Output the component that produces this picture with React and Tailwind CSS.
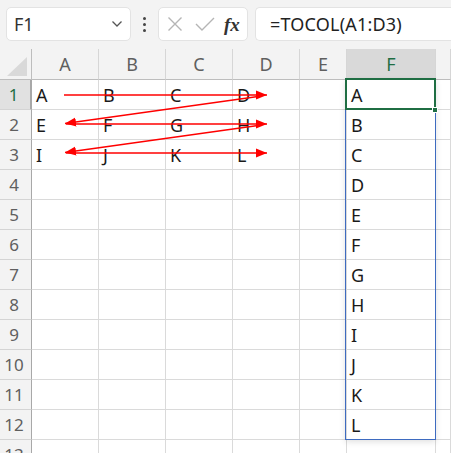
import React from "react";

const FONT = { fontFamily: '"Noto Sans", "Noto Sans CJK JP", sans-serif' };
const data = [
  ["A", "B", "C", "D"],
  ["E", "F", "G", "H"],
  ["I", "J", "K", "L"],
];
const fcol = "ABCDEFGHIJKL";
const headers = ["A", "B", "C", "D", "E", "F", ""];

function Toolbar() {
  return (
    <div className="h-[49px] flex items-start pt-[7px] pl-[6px] bg-[#f3f3f3]">
      <div className="w-[125px] h-[34px] bg-white rounded-[5px] border border-[#e3e3e3] flex items-center pl-[7px] pr-[7px] justify-between">
        <span className="text-[18px] text-[#333] leading-none">F1</span>
        <svg width="12" height="8" viewBox="0 0 12 8">
          <path d="M1.5 1.5 L6 6 L10.5 1.5" fill="none" stroke="#555" strokeWidth="1.3" />
        </svg>
      </div>
      <div className="w-[27px] h-[34px] flex flex-col items-center justify-center gap-[3px]">
        <div className="w-[3px] h-[3px] rounded-full bg-[#444]" />
        <div className="w-[3px] h-[3px] rounded-full bg-[#444]" />
        <div className="w-[3px] h-[3px] rounded-full bg-[#444]" />
      </div>
      <div className="w-[90px] h-[34px] bg-white rounded-[5px] border border-[#e3e3e3] flex items-center pl-[8px]">
        <svg width="16" height="16" viewBox="0 0 16 16" className="mr-[12px]">
          <path d="M1.5 1.5 L14.5 14.5 M14.5 1.5 L1.5 14.5" stroke="#b5b5b5" strokeWidth="1.4" fill="none" />
        </svg>
        <svg width="20" height="16" viewBox="0 0 20 16" className="mr-[9px]">
          <path d="M1 8 L7 14 L19 2" stroke="#b5b5b5" strokeWidth="1.4" fill="none" />
        </svg>
        <span
          className="text-[19px] italic font-bold text-[#333] leading-none"
          style={{ fontFamily: '"Liberation Serif", "DejaVu Serif", serif' }}
        >
          fx
        </span>
      </div>
      <div className="ml-[7px] flex-1 h-[34px] bg-white rounded-l-[5px] border border-r-0 border-[#e3e3e3] flex items-center pl-[14px]">
        <span className="text-[18px] text-[#222] leading-none tracking-[0.2px]">=TOCOL(A1:D3)</span>
      </div>
    </div>
  );
}

function Grid() {
  const rows = [];
  for (let r = 1; r <= 13; r++) {
    const vals = [
      r <= 3 ? data[r - 1][0] : "",
      r <= 3 ? data[r - 1][1] : "",
      r <= 3 ? data[r - 1][2] : "",
      r <= 3 ? data[r - 1][3] : "",
      "",
      r <= 12 ? fcol[r - 1] : "",
      "",
    ];
    rows.push(
      <div
        key={"rh" + r}
        className={
          "h-[30px] flex items-center justify-center pr-[3px] border-b border-b-[#d4d4d4] border-r border-r-[#a8a8a8] text-[17px] leading-none " +
          (r === 1 ? "bg-[#e1e1e1] text-[#1f6e43] border-r-2 border-r-[#1f6e43]" : "bg-[#f3f3f3] text-[#5f5f5f]")
        }
      >
        {r}
      </div>
    );
    vals.forEach((v, i) => {
      rows.push(
        <div
          key={r + "-" + i}
          className="h-[30px] flex items-center pl-[4px] border-b border-r border-[#dadada] bg-white text-[18px] text-[#1a1a1a] leading-none"
        >
          {v}
        </div>
      );
    });
  }
  return (
    <div className="grid grid-cols-[32px_67px_67px_67px_67px_47px_89px_1fr]">
      <div className="h-[31px] bg-[#f3f3f3] border-b border-r border-[#bdbdbd] flex items-end justify-end pr-[4px] pb-[3px]">
        <svg width="20" height="19" viewBox="0 0 20 19">
          <path d="M0 19 L20 0 L20 19 Z" fill="#d9d9d9" />
        </svg>
      </div>
      {headers.map((h, i) => (
        <div
          key={"h" + i}
          className={
            "h-[31px] flex items-center justify-center border-r border-r-[#d6d6d6] text-[18px] leading-none " +
            (h === "F"
              ? "bg-[#d9d9d9] text-[#1f6e43] border-b-2 border-b-[#1f6e43]"
              : "bg-[#f3f3f3] text-[#5f5f5f] border-b border-b-[#bdbdbd]")
          }
        >
          {h}
        </div>
      ))}
      {rows}
    </div>
  );
}

function Arrows() {
  return (
    <svg className="absolute left-0 top-0 pointer-events-none" width="451" height="453" viewBox="0 0 451 453">
      <defs>
        <marker id="ah" markerUnits="userSpaceOnUse" markerWidth="12" markerHeight="10" refX="11" refY="5" orient="auto">
          <path d="M0 0.5 L11 5 L0 9.5 Z" fill="#ff0000" />
        </marker>
      </defs>
      <g stroke="#ff0000" strokeWidth="1.4" fill="none">
        <line x1="64" y1="95" x2="267" y2="95" markerEnd="url(#ah)" />
        <line x1="258" y1="96.5" x2="65" y2="123.5" markerEnd="url(#ah)" />
        <line x1="66" y1="124" x2="267" y2="124" markerEnd="url(#ah)" />
        <line x1="258" y1="125.5" x2="65" y2="152.5" markerEnd="url(#ah)" />
        <line x1="66" y1="153" x2="267" y2="153" markerEnd="url(#ah)" />
      </g>
    </svg>
  );
}

export default function App() {
  return (
    <div className="relative w-[451px] h-[453px] overflow-hidden bg-white" style={FONT}>
      <Toolbar />
      <Grid />
      <div className="absolute left-[345px] top-[79px] w-[91px] h-[361px] border border-[#3e6bc0] shadow-[0_2px_6px_rgba(0,0,0,0.12)] pointer-events-none" />
      <div className="absolute left-[345px] top-[78px] w-[91px] h-[32px] border-2 border-[#1f6e43] pointer-events-none" />
      <div className="absolute left-[432px] top-[107px] w-[6px] h-[6px] bg-[#1f6e43] border border-white pointer-events-none" />
      <Arrows />
    </div>
  );
}
